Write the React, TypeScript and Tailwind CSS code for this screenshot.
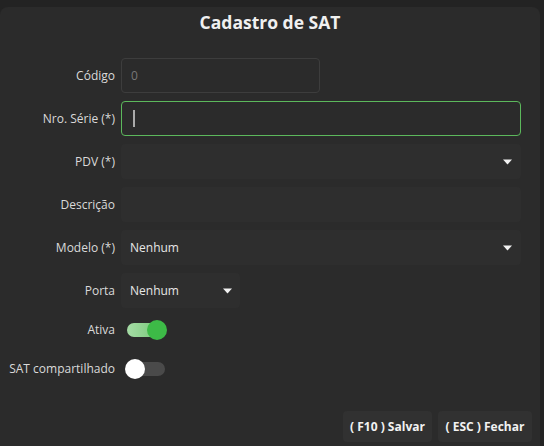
import { useState } from 'react';

const font = { fontFamily: '"Open Sans", "Liberation Sans", sans-serif' };

function Caret() {
  return (
    <svg width="9" height="6" viewBox="0 0 9 6" className="shrink-0">
      <path d="M0 0.5 H9 L4.5 5.5 Z" fill="#f2f2f2" />
    </svg>
  );
}

function Row({ label, children, className = 'h-[35px]' }: { label: string; children: React.ReactNode; className?: string }) {
  return (
    <div className={`flex items-center ${className}`}>
      <div className="w-[115px] shrink-0 text-right text-[12px] text-[#dadada]">{label}</div>
      <div className="ml-[6px] flex h-full flex-1 items-center">{children}</div>
    </div>
  );
}

function Toggle({ on, onChange }: { on: boolean; onChange: () => void }) {
  return (
    <button onClick={onChange} className="relative ml-[6px] h-[20px] w-[40px]">
      <span
        className={
          on
            ? 'absolute left-0 top-[3px] h-[14px] w-[38px] rounded-full bg-gradient-to-r from-[#a6dca6] to-[#6cc46e]'
            : 'absolute left-0 top-[3px] h-[14px] w-[38px] rounded-full bg-[#4a4a4a]'
        }
      />
      <span
        className={
          on
            ? 'absolute left-[20px] top-0 h-[20px] w-[20px] rounded-full bg-[#3dba47]'
            : 'absolute left-[-2px] top-0 h-[20px] w-[20px] rounded-full bg-white'
        }
      />
    </button>
  );
}

export default function App() {
  const [ativa, setAtiva] = useState(true);
  const [compart, setCompart] = useState(false);

  return (
    <div className="h-[446px] w-[544px] overflow-hidden bg-[#232323] pt-[7px]" style={font}>
      <div className="flex h-[439px] w-[540px] flex-col rounded-t-[8px] bg-[#2b2b2b]">
        <h1 className="pt-[3px] text-center text-[17.5px] font-bold leading-[24px] text-[#f0f0f0]">Cadastro de SAT</h1>

        <div className="mt-[24px] flex flex-col gap-[8px] pr-[19px]">
          <Row label="Código">
            <div className="flex h-full w-[199px] items-center rounded-[4px] border border-[#3d3d3d] px-[9px] text-[12px] text-[#777]">0</div>
          </Row>
          <Row label="Nro. Série (*)">
            <div className="flex h-full flex-1 items-center rounded-[4px] border border-[#5cb85c] px-[11px]">
              <span className="h-[17px] w-[2px] bg-[#aaa]" />
            </div>
          </Row>
          <Row label="PDV (*)">
            <div className="flex h-full flex-1 items-center justify-end rounded-[4px] bg-[#2e2e2e] pr-[9px]">
              <Caret />
            </div>
          </Row>
          <Row label="Descrição">
            <div className="h-full flex-1 rounded-[4px] bg-[#2e2e2e]" />
          </Row>
          <Row label="Modelo (*)">
            <div className="flex h-full flex-1 items-center justify-between rounded-[4px] bg-[#2e2e2e] px-[9px] text-[12px] text-[#e6e6e6]">
              <span>Nenhum</span>
              <Caret />
            </div>
          </Row>
          <Row label="Porta">
            <div className="flex h-full w-[119px] items-center justify-between rounded-[4px] bg-[#2e2e2e] pl-[9px] pr-[8px] text-[12px] text-[#e6e6e6]">
              <span>Nenhum</span>
              <Caret />
            </div>
          </Row>
          <Row label="Ativa" className="mt-[1px] h-[26px]">
            <Toggle on={ativa} onChange={() => setAtiva(!ativa)} />
          </Row>
          <Row label="SAT compartilhado" className="mt-[5px] h-[26px]">
            <Toggle on={compart} onChange={() => setCompart(!compart)} />
          </Row>
        </div>

        <div className="mt-auto mb-[4px] flex justify-end gap-[6px] pr-[8px]">
          <button className="h-[31px] w-[89px] rounded-[4px] bg-[#313131] text-[12px] font-bold text-[#f2f2f2]">( F10 ) Salvar</button>
          <button className="h-[31px] w-[94px] rounded-[4px] bg-[#313131] text-[12px] font-bold text-[#f2f2f2]">( ESC ) Fechar</button>
        </div>
      </div>
    </div>
  );
}
